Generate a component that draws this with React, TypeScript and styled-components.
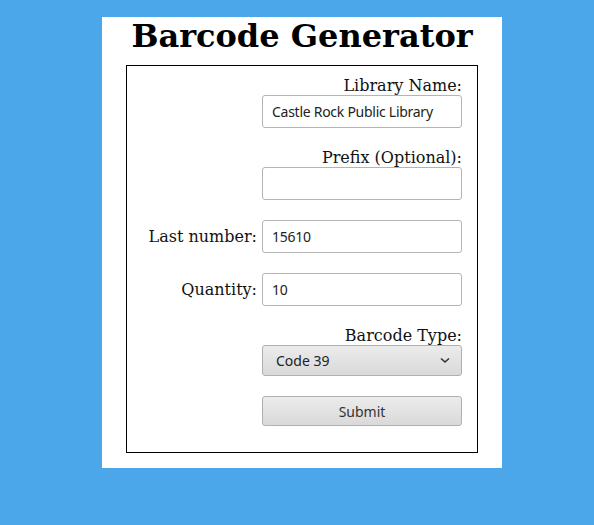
import React from "react";
import styled, { createGlobalStyle } from "styled-components";

const Global = createGlobalStyle`
  html, body { margin: 0; padding: 0; background: #4ba6ea; }
  body { font-family: "DejaVu Serif", serif; min-height: 525px; }
`;

const Page = styled.div`
  padding: 17px 0 0 102px;
`;

const Card = styled.div`
  width: 400px;
  box-sizing: border-box;
  background: #ffffff;
  padding: 0 24px 15px 24px;
`;

const Title = styled.h1`
  margin: 0 0 10px 0;
  font-family: "DejaVu Serif", serif;
  font-weight: bold;
  font-size: 32px;
  line-height: 38px;
  text-align: center;
  color: #000;
`;

const Form = styled.form`
  border: 1px solid #000;
  padding: 10px 15px 26px 15px;
  display: flex;
  flex-direction: column;
  gap: 20px;
`;

const Field = styled.div`
  display: flex;
  flex-wrap: wrap;
  justify-content: flex-end;
  align-items: center;
  column-gap: 5px;
  row-gap: 0;
`;

const Label = styled.label`
  font-family: "DejaVu Serif", serif;
  font-size: 16px;
  line-height: 19px;
  color: #111;
`;

const Input = styled.input`
  box-sizing: border-box;
  width: 200px;
  height: 33px;
  margin: 0;
  border: 1px solid #b4b4b4;
  border-radius: 3px;
  padding: 0 9px;
  font-family: "Noto Sans", sans-serif;
  font-size: 14px;
  letter-spacing: -0.27px;
  color: #222;
  background: #fff;
  outline: none;
`;

const SelectBox = styled.div`
  box-sizing: border-box;
  width: 200px;
  height: 31px;
  border: 1px solid #b0b0b0;
  border-radius: 3px;
  background: linear-gradient(#ececec, #d9d9d9);
  display: flex;
  align-items: center;
  justify-content: space-between;
  padding: 0 11px 0 13px;
  font-family: "Noto Sans", sans-serif;
  font-size: 14px;
  color: #222;
`;

const Button = styled.button`
  box-sizing: border-box;
  width: 200px;
  height: 30px;
  margin: 0;
  border: 1px solid #b0b0b0;
  border-radius: 3px;
  background: linear-gradient(#ececec, #d9d9d9);
  font-family: "Noto Sans", sans-serif;
  font-size: 14px;
  color: #333;
  padding: 0;
`;

const Chevron = () => (
  <svg width="10" height="7" viewBox="0 0 10 7">
    <path d="M1 1.5 L5 5 L9 1.5" fill="none" stroke="#333" strokeWidth="1.6" />
  </svg>
);

export default function App() {
  return (
    <>
      <Global />
      <Page>
        <Card>
          <Title>Barcode Generator</Title>
          <Form onSubmit={(e) => e.preventDefault()}>
            <Field>
              <Label>Library Name:</Label>
              <Input defaultValue="Castle Rock Public Library" />
            </Field>
            <Field>
              <Label>Prefix (Optional):</Label>
              <Input defaultValue="" />
            </Field>
            <Field>
              <Label>Last number:</Label>
              <Input defaultValue="15610" />
            </Field>
            <Field>
              <Label>Quantity:</Label>
              <Input defaultValue="10" />
            </Field>
            <Field>
              <Label>Barcode Type:</Label>
              <SelectBox>
                <span>Code 39</span>
                <Chevron />
              </SelectBox>
            </Field>
            <Field>
              <Button type="submit">Submit</Button>
            </Field>
          </Form>
        </Card>
      </Page>
    </>
  );
}
